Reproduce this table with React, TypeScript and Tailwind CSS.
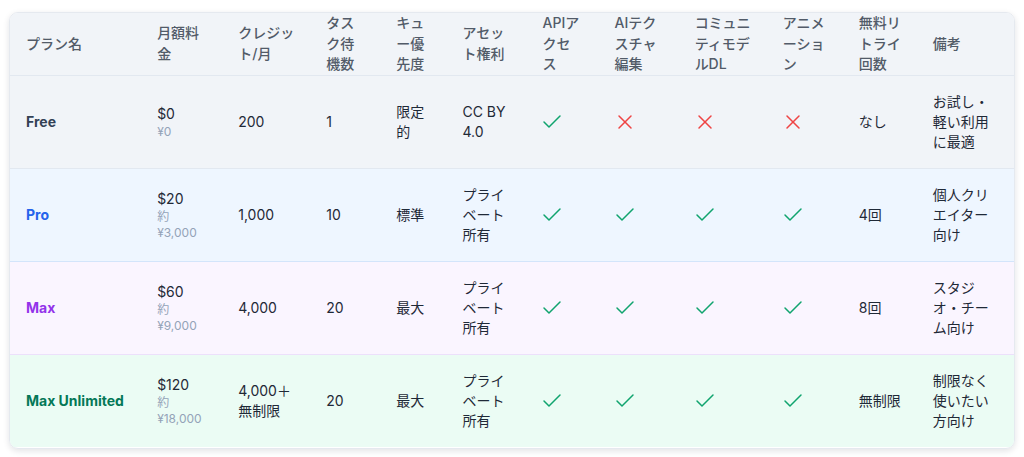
import { Check, X } from "lucide-react";

const columns = [
  { label: "プラン名", width: "w-[131px]" },
  { label: "月額料金", width: "w-[81px]" },
  { label: "クレジット/月", width: "w-[88px]" },
  { label: "タスク待機数", width: "w-[70px]" },
  { label: "キュー優先度", width: "w-[66px]" },
  { label: "アセット権利", width: "w-[80px]" },
  { label: "APIアクセス", width: "w-[72px]" },
  { label: "AIテクスチャ編集", width: "w-[80px]" },
  { label: "コミュニティモデルDL", width: "w-[88px]" },
  { label: "アニメーション", width: "w-[76px]" },
  { label: "無料リトライ回数", width: "w-[74px]" },
  { label: "備考", width: "w-[97px]" }
];

const plans = [
  {
    name: "Free",
    nameClass: "text-[#334155]",
    rowClass: "bg-[#f1f4f8] border-[#e2e8f0]",
    price: "$0",
    yen: "¥0",
    credits: "200",
    queue: "1",
    priority: "限定的",
    rights: "CC BY 4.0",
    api: true,
    texture: false,
    community: false,
    animation: false,
    retry: "なし",
    note: "お試し・軽い利用に最適"
  },
  {
    name: "Pro",
    nameClass: "text-[#2563eb]",
    rowClass: "bg-[#eef6ff] border-[#d3e5fb]",
    price: "$20",
    yen: "約 ¥3,000",
    credits: "1,000",
    queue: "10",
    priority: "標準",
    rights: "プライベート所有",
    api: true,
    texture: true,
    community: true,
    animation: true,
    retry: "4回",
    note: "個人クリエイター向け"
  },
  {
    name: "Max",
    nameClass: "text-[#9333ea]",
    rowClass: "bg-[#faf5ff] border-[#ece0fb]",
    price: "$60",
    yen: "約 ¥9,000",
    credits: "4,000",
    queue: "20",
    priority: "最大",
    rights: "プライベート所有",
    api: true,
    texture: true,
    community: true,
    animation: true,
    retry: "8回",
    note: "スタジオ・チーム向け"
  },
  {
    name: "Max Unlimited",
    nameClass: "text-[#047857]",
    rowClass: "bg-[#ebfcf4] border-transparent",
    price: "$120",
    yen: "約 ¥18,000",
    credits: "4,000＋無制限",
    queue: "20",
    priority: "最大",
    rights: "プライベート所有",
    api: true,
    texture: true,
    community: true,
    animation: true,
    retry: "無制限",
    note: "制限なく使いたい方向け"
  }
];

function Mark({ ok }: { ok: boolean }) {
  return ok ? (
    <Check size={24} strokeWidth={1.5} className="-ml-[2px] text-[#10a46e]" />
  ) : (
    <X size={24} strokeWidth={1.5} className="-ml-[2px] text-[#ef4444]" />
  );
}

export default function App() {
  return (
    <div className="min-h-screen bg-white px-[9px] pt-3 font-['Inter','Noto_Sans_CJK_JP',sans-serif] text-sm text-[#1f2937]">
      <div className="overflow-hidden rounded-[9px] border border-[#e5e9ef] shadow-[0_2px_6px_rgba(15,23,42,0.12)]">
        <table className="w-full table-fixed border-collapse text-left">
          <colgroup>
            {columns.map((c) => (
              <col key={c.label} className={c.width} />
            ))}
          </colgroup>
          <thead>
            <tr className="border-b border-[#e2e8f0] bg-[#f1f4f8]">
              {columns.map((c) => (
                <th key={c.label} className="h-[62px] px-4 py-0 align-middle text-sm font-medium leading-[20.5px] text-[#525b68]">
                  {c.label}
                </th>
              ))}
            </tr>
          </thead>
          <tbody>
            {plans.map((p) => (
              <tr key={p.name} className={`border-b ${p.rowClass}`}>
                <td className={`px-4 py-4 align-middle font-bold leading-5 ${p.nameClass}`}>{p.name}</td>
                <td className="px-4 py-4 align-middle leading-5">
                  <div>{p.price}</div>
                  <div className="text-xs leading-4 text-[#94a3b8]">{p.yen}</div>
                </td>
                <td className="px-4 py-4 align-middle leading-5">{p.credits}</td>
                <td className="px-4 py-4 align-middle leading-5">{p.queue}</td>
                <td className="px-4 py-4 align-middle leading-5">{p.priority}</td>
                <td className="px-4 py-4 align-middle leading-5">{p.rights}</td>
                <td className="px-4 py-4 align-middle leading-5">
                  <Mark ok={p.api} />
                </td>
                <td className="px-4 py-4 align-middle leading-5">
                  <Mark ok={p.texture} />
                </td>
                <td className="px-4 py-4 align-middle leading-5">
                  <Mark ok={p.community} />
                </td>
                <td className="px-4 py-4 align-middle leading-5">
                  <Mark ok={p.animation} />
                </td>
                <td className="px-4 py-4 align-middle leading-5">{p.retry}</td>
                <td className="px-4 py-4 align-middle leading-5">{p.note}</td>
              </tr>
            ))}
          </tbody>
        </table>
      </div>
    </div>
  );
}
